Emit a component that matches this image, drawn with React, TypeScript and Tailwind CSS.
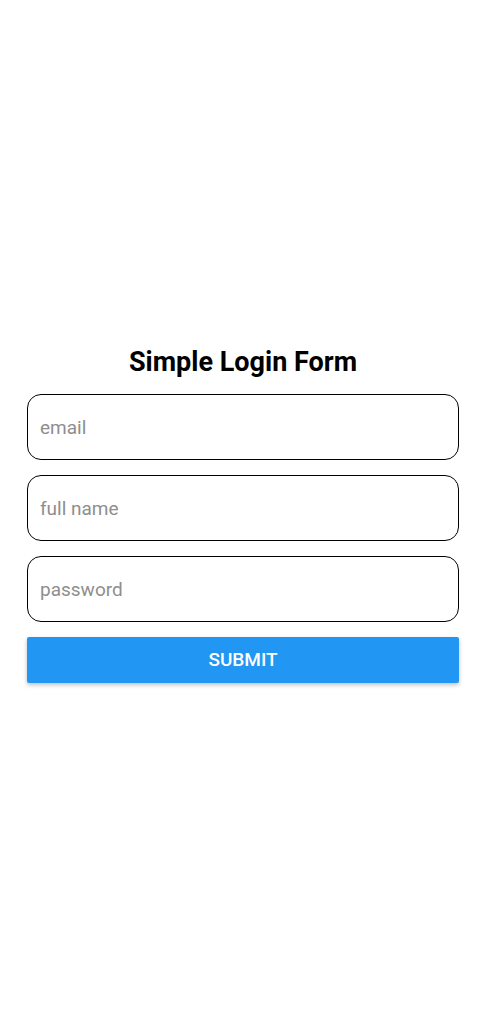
import React from "react";

export default function App() {
  return (
    <div className="min-h-[1011px] w-full bg-white flex flex-col px-[27px] pt-[346px]" style={{ fontFamily: "Roboto, 'Noto Sans', sans-serif" }}>
      <h1 className="text-center text-[27px] leading-[32px] font-bold text-black">Simple Login Form</h1>
      <div className="mt-[16px] flex flex-col gap-[15px]">
        <input placeholder="email" className="h-[66px] w-full rounded-[14px] border-[1.5px] border-black px-[12px] text-[19px] text-black placeholder:text-[#8e8e8e] outline-none" />
        <input placeholder="full name" className="h-[66px] w-full rounded-[14px] border-[1.5px] border-black px-[12px] text-[19px] text-black placeholder:text-[#8e8e8e] outline-none" />
        <input placeholder="password" type="password" className="h-[66px] w-full rounded-[14px] border-[1.5px] border-black px-[12px] text-[19px] text-black placeholder:text-[#8e8e8e] outline-none" />
        <button className="h-[46px] w-full rounded-[2px] bg-[#2196F3] text-white text-[19px] font-medium uppercase shadow-[0_2px_4px_rgba(0,0,0,0.25)]">Submit</button>
      </div>
    </div>
  );
}
